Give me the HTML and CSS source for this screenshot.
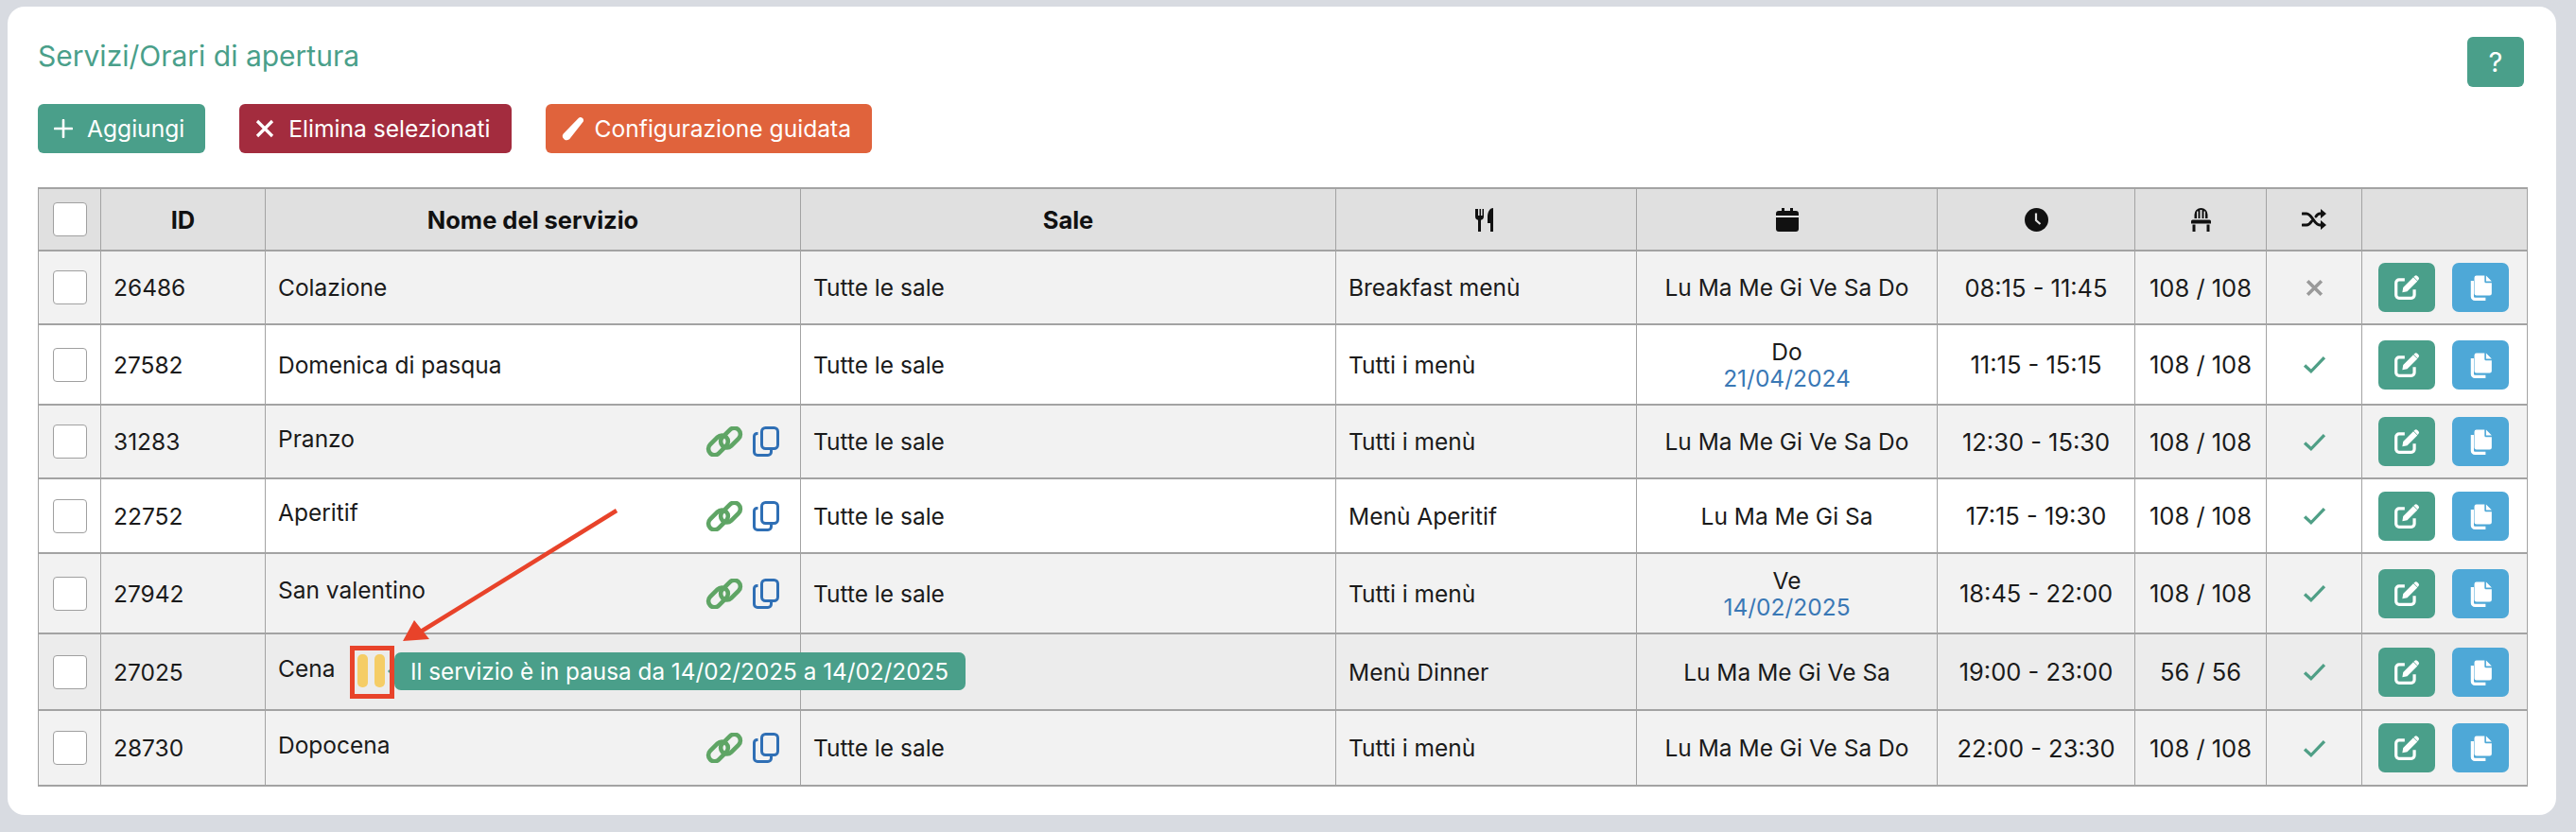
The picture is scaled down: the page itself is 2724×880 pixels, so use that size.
FILE: index.html
```html
<!DOCTYPE html>
<html lang="it">
<head>
<meta charset="utf-8">
<title>Servizi/Orari di apertura</title>
<link rel="stylesheet" href="styles.css">
</head>
<body>
<svg class="defs" width="0" height="0" aria-hidden="true">
  <defs>
    <symbol id="i-link" viewBox="0 0 40 32"><g fill="none" stroke="#5fa565" stroke-width="4.6"><rect x="-1" y="9.5" width="24" height="13" rx="6.5" transform="rotate(-45 11 16) translate(-1 4.5)"/><rect x="17" y="9.5" width="24" height="13" rx="6.5" transform="rotate(-45 29 16) translate(1 -4.5)"/></g></symbol>
    <symbol id="i-dup" viewBox="0 0 28 32"><g fill="none" stroke="#2f6fb5" stroke-width="3"><rect x="9.5" y="1.5" width="17" height="22" rx="4"/><path d="M5.500 7.500 H4.500 A3 3 0 0 0 1.500 10.500 V27 A3.500 3.500 0 0 0 5 30.500 H16 A3.500 3.500 0 0 0 19.500 27 V24"/></g></symbol>
    <symbol id="i-edit" viewBox="0 0 26 26"><path d="M11 5.500H5.500A3 3 0 0 0 2.500 8.500V20.500A3 3 0 0 0 5.500 23.500H17.500A3 3 0 0 0 20.500 20.500V15" fill="none" stroke="#fff" stroke-width="3"/><path d="M9.500 13 19.500 3l4 4-10 10-4.800.8zM20.700 1.800a2 2 0 0 1 2.800 0l1 1a2 2 0 0 1 0 2.800l-.8.800-3.800-3.800z" fill="#fff"/></symbol>
    <symbol id="i-copy" viewBox="0 0 24 26"><path d="M8 1.500h8v6a1 1 0 0 0 1 1h6V19a2 2 0 0 1-2 2H8a2 2 0 0 1-2-2V3.500a2 2 0 0 1 2-2zM17.500 1.500 23 7h-5.500z" fill="#fff"/><path d="M4 6.500V22a2.500 2.500 0 0 0 2.500 2.500H17" fill="none" stroke="#fff" stroke-width="3"/></symbol>
    <symbol id="i-check" viewBox="0 0 24 20"><path d="M2 11 8.500 17 22 3" fill="none" stroke="#4f9f86" stroke-width="3.200"/></symbol>
    <symbol id="i-x" viewBox="0 0 20 20"><path d="M3 3 17 17M17 3 3 17" fill="none" stroke="#9a9a9a" stroke-width="3.400"/></symbol>
  </defs>
</svg>
<main class="card">
  <header class="top">
    <h1 class="title">Servizi/Orari di apertura</h1>
    <button class="help" type="button">?</button>
  </header>
  <div class="toolbar">
    <button class="btn green" type="button"><svg class="bi" viewBox="0 0 20 20"><path d="M10 1V19M1 10H19" fill="none" stroke="#fff" stroke-width="2.600" stroke-linecap="round"/></svg>Aggiungi</button>
    <button class="btn red" type="button"><svg class="bi" viewBox="0 0 20 20"><path d="M2 2 18 18M18 2 2 18" fill="none" stroke="#fff" stroke-width="3.200"/></svg>Elimina selezionati</button>
    <button class="btn orange" type="button"><svg class="bi wide" viewBox="0 0 24 24"><path d="M17.500 1.500a3 3 0 0 1 4.500 3.500L9.500 21a4 4 0 0 1-6 1.500A4 4 0 0 1 2.500 17z" fill="#fff"/></svg>Configurazione guidata</button>
  </div>
  <table class="grid">
    <colgroup>
      <col class="c1"><col class="c2"><col class="c3"><col class="c3"><col class="c4"><col class="c4"><col class="c5"><col class="c6"><col class="c7"><col class="c8">
    </colgroup>
    <thead>
      <tr class="h66">
        <th><span class="box"></span></th>
        <th>ID</th>
        <th>Nome del servizio</th>
        <th>Sale</th>
        <th><svg class="hi w23" viewBox="0 0 23 25"><path d="M0 1v8a4 4 0 0 0 3 3.800V25h3V12.800A4 4 0 0 0 9 9V1H7.500v7H6V1H4.500v7H3V1.000H1.500V8H1.500V1zM16 25h3V0c-3 0-6 3-6 10v6h3z" fill="#111"/></svg></th>
        <th><svg class="hi w24" viewBox="0 0 24 25"><path d="M6 0h3v3h6V0h3v3h3a3 3 0 0 1 3 3v2H0V6a3 3 0 0 1 3-3h3zM0 10h24v12a3 3 0 0 1-3 3H3a3 3 0 0 1-3-3z" fill="#111"/></svg></th>
        <th><svg class="hi w25" viewBox="0 0 25 25"><circle cx="12.500" cy="12.500" r="12.500" fill="#111"/><path d="M12 5.500V13L16.500 17" fill="none" stroke="#e0e0e0" stroke-width="2.200"/></svg></th>
        <th><svg class="hi w21" viewBox="0 0 21 25"><path d="M3.500 11V7a7 7 0 0 1 14 0v4H15V3.500h-1.500V11h-2V2h-2v9h-2V3.500H6V11zM1.500 12.500h18A1.500 1.500 0 0 1 21 14v2.500H0V14a1.500 1.500 0 0 1 1.500-1.500zM1.500 17.500h3V25h-3zM16.500 17.500h3V25h-3z" fill="#111"/></svg></th>
        <th><svg class="hi w26" viewBox="0 0 26 22"><path d="M1 5h4c6 0 8 12 14 12h3M1 17h4c2.500 0 4.200-2 5.500-4M15 8c1-1.500 2.200-3 4-3h3" fill="none" stroke="#111" stroke-width="3" stroke-linecap="round"/><path d="M20 0 26 5l-6 5zM20 12l6 5-6 5z" fill="#111"/></svg></th>
        <th></th>
      </tr>
    </thead>
    <tbody>
      <tr class="row alt h78">
        <td><span class="box"></span></td><td>26486</td><td>Colazione</td><td>Tutte le sale</td><td>Breakfast menù</td>
        <td class="ctr">Lu Ma Me Gi Ve Sa Do</td><td class="ctr num">08:15 - 11:45</td><td class="ctr num">108 / 108</td>
        <td class="ctr"><svg class="st"><use href="#i-x"/></svg></td>
        <td class="acts"><span class="act green"><svg class="ai"><use href="#i-edit"/></svg></span><span class="act blue"><svg class="ai"><use href="#i-copy"/></svg></span></td>
      </tr>
      <tr class="row h85">
        <td><span class="box"></span></td><td>27582</td><td>Domenica di pasqua</td><td>Tutte le sale</td><td>Tutti i menù</td>
        <td class="ctr tight">Do<br><span class="date">21/04/2024</span></td><td class="ctr num">11:15 - 15:15</td><td class="ctr num">108 / 108</td>
        <td class="ctr"><svg class="st"><use href="#i-check"/></svg></td>
        <td class="acts"><span class="act green"><svg class="ai"><use href="#i-edit"/></svg></span><span class="act blue"><svg class="ai"><use href="#i-copy"/></svg></span></td>
      </tr>
      <tr class="row alt h78">
        <td><span class="box"></span></td><td>31283</td>
        <td><div class="name"><span class="nm">Pranzo</span><span class="tools"><svg class="tl"><use href="#i-link"/></svg><svg class="td"><use href="#i-dup"/></svg></span></div></td>
        <td>Tutte le sale</td><td>Tutti i menù</td>
        <td class="ctr">Lu Ma Me Gi Ve Sa Do</td><td class="ctr num">12:30 - 15:30</td><td class="ctr num">108 / 108</td>
        <td class="ctr"><svg class="st"><use href="#i-check"/></svg></td>
        <td class="acts"><span class="act green"><svg class="ai"><use href="#i-edit"/></svg></span><span class="act blue"><svg class="ai"><use href="#i-copy"/></svg></span></td>
      </tr>
      <tr class="row h79">
        <td><span class="box"></span></td><td>22752</td>
        <td><div class="name"><span class="nm">Aperitif</span><span class="tools"><svg class="tl"><use href="#i-link"/></svg><svg class="td"><use href="#i-dup"/></svg></span></div></td>
        <td>Tutte le sale</td><td>Menù Aperitif</td>
        <td class="ctr">Lu Ma Me Gi Sa</td><td class="ctr num">17:15 - 19:30</td><td class="ctr num">108 / 108</td>
        <td class="ctr"><svg class="st"><use href="#i-check"/></svg></td>
        <td class="acts"><span class="act green"><svg class="ai"><use href="#i-edit"/></svg></span><span class="act blue"><svg class="ai"><use href="#i-copy"/></svg></span></td>
      </tr>
      <tr class="row alt h85">
        <td><span class="box"></span></td><td>27942</td>
        <td><div class="name"><span class="nm">San valentino</span><span class="tools"><svg class="tl"><use href="#i-link"/></svg><svg class="td"><use href="#i-dup"/></svg></span></div></td>
        <td>Tutte le sale</td><td>Tutti i menù</td>
        <td class="ctr tight">Ve<br><span class="date">14/02/2025</span></td><td class="ctr num">18:45 - 22:00</td><td class="ctr num">108 / 108</td>
        <td class="ctr"><svg class="st"><use href="#i-check"/></svg></td>
        <td class="acts"><span class="act green"><svg class="ai"><use href="#i-edit"/></svg></span><span class="act blue"><svg class="ai"><use href="#i-copy"/></svg></span></td>
      </tr>
      <tr class="row hover h81">
        <td><span class="box"></span></td><td>27025</td>
        <td><div class="name"><span class="nm">Cena</span><span class="tools"><svg class="tl"><use href="#i-link"/></svg><svg class="td"><use href="#i-dup"/></svg></span></div></td>
        <td></td><td>Menù Dinner</td>
        <td class="ctr">Lu Ma Me Gi Ve Sa</td><td class="ctr num">19:00 - 23:00</td><td class="ctr num">56 / 56</td>
        <td class="ctr"><svg class="st"><use href="#i-check"/></svg></td>
        <td class="acts"><span class="act green"><svg class="ai"><use href="#i-edit"/></svg></span><span class="act blue"><svg class="ai"><use href="#i-copy"/></svg></span></td>
      </tr>
      <tr class="row alt h80">
        <td><span class="box"></span></td><td>28730</td>
        <td><div class="name"><span class="nm">Dopocena</span><span class="tools"><svg class="tl"><use href="#i-link"/></svg><svg class="td"><use href="#i-dup"/></svg></span></div></td>
        <td>Tutte le sale</td><td>Tutti i menù</td>
        <td class="ctr">Lu Ma Me Gi Ve Sa Do</td><td class="ctr num">22:00 - 23:30</td><td class="ctr num">108 / 108</td>
        <td class="ctr"><svg class="st"><use href="#i-check"/></svg></td>
        <td class="acts"><span class="act green"><svg class="ai"><use href="#i-edit"/></svg></span><span class="act blue"><svg class="ai"><use href="#i-copy"/></svg></span></td>
      </tr>
    </tbody>
  </table>
</main>
<div class="pause"><i></i><i></i></div>
<div class="tip">Il servizio è in pausa da 14/02/2025 a 14/02/2025</div>
<div class="mark"></div>
<svg class="arrow" viewBox="0 0 240 150"><path d="M227 5 20 133" fill="none" stroke="#e8432a" stroke-width="4.500"/><path d="M1 143 13 121 29 141z" fill="#e8432a"/></svg>
</body>
</html>
```
FILE: styles.css
```css
* { box-sizing: border-box; }
html, body { margin: 0; height: 880px; }
body {
  background: #d8dbe1;
  font-family: Inter, "Liberation Sans", sans-serif;
  font-size: 24.5px;
  color: #1a1a1a;
  overflow: hidden;
  position: relative;
}
.defs { position: absolute; }
.card {
  margin: 7px 21px 0 8px;
  height: 855px;
  background: #fff;
  border-radius: 18px;
  padding: 32px 31px 0 32px;
}
.top { display: flex; justify-content: space-between; align-items: flex-start; height: 53px; padding-right: 3px; }
.title { margin: 0; font-size: 30px; font-weight: 400; color: #4a9f8a; line-height: 40px; }
.help {
  width: 60px; height: 53px; border: 0; border-radius: 6px;
  background: #4a9f8a; color: #fff; font: 400 29px Inter, sans-serif; padding: 0;
}
.toolbar { display: flex; gap: 36px; margin-top: 18px; margin-bottom: 36px; }
.btn {
  height: 52px; border: 0; border-radius: 6px; padding: 0 22px 0 17px;
  display: flex; align-items: center; gap: 15px; color: #fff;
  font: 400 24.6px Inter, sans-serif; white-space: nowrap;
}
.bi { width: 20px; height: 20px; flex: none; }
.bi.wide { width: 26px; height: 26px; margin-left: -1px; margin-right: -5px; }
.green { background: #4a9f8a; }
.red { background: #a32c3e; }
.orange { background: #e0633c; }
.blue { background: #4ea8d7; }
.grid { width: 2632px; table-layout: fixed; border-collapse: collapse; }
.c1 { width: 66px; } .c2 { width: 174px; } .c3 { width: 566px; } .c4 { width: 318px; }
.c5 { width: 209px; } .c6 { width: 139px; } .c7 { width: 101px; } .c8 { width: 175px; }
.grid th, .grid td { border: 1px solid #a3a3a3; padding: 0 13px; vertical-align: middle; }
.grid tr { border-top: 2px solid #a3a3a3; border-bottom: 2px solid #a3a3a3; }
.grid th { background: #e0e0e0; font-size: 25.500px; font-weight: 700; text-align: center; color: #111; }
.grid th:first-child, .grid td:first-child { padding: 0; text-align: center; }
.h66 { height: 66px; } .h78 { height: 78px; } .h79 { height: 79px; } .h80 { height: 80px; } .h81 { height: 81px; } .h85 { height: 85px; }
.row { background: #fff; }
.alt { background: #f2f2f2; }
.hover { background: #ececec; }
.box { display: inline-block; width: 36px; height: 36px; background: #fff; border: 1px solid #a0a0a0; border-radius: 4px; vertical-align: middle; }
.ctr { text-align: center; }
.grid td.num { font-size: 25.500px; padding: 0; }
.tight { line-height: 28px; }
.date { color: #3a78b5; }
.name { display: flex; justify-content: space-between; align-items: center; padding-right: 9px; }
.nm { margin-bottom: 7px; }
.tools { display: flex; align-items: center; gap: 10px; }
.tl { width: 40px; height: 32px; }
.td { width: 28px; height: 32px; }
.st { width: 25px; height: 21px; display: block; margin: 0 auto; }
.hi { display: block; margin: 0 auto; height: 25px; }
.w21 { width: 21px; } .w23 { width: 23px; } .w24 { width: 24px; } .w25 { width: 25px; }
.w26 { width: 26px; height: 22px; }
.grid td.acts { padding: 0 0 0 17px; }
.acts { white-space: nowrap; }
.act { display: inline-flex; width: 60px; height: 52px; border-radius: 7px; align-items: center; justify-content: center; vertical-align: middle; }
.act + .act { margin-left: 18px; }
.ai { width: 28px; height: 28px; }
.pause { position: absolute; left: 378px; top: 692px; display: flex; gap: 7px; }
.pause i { display: block; width: 11px; height: 35px; border-radius: 5px; background: #f5cd66; }
.mark { position: absolute; left: 370px; top: 683px; width: 47px; height: 56px; border: 5px solid #e8432a; }
.tip {
  position: absolute; left: 417px; top: 690px; width: 604px; height: 40px;
  background: #4a9f8a; color: #fff; border-radius: 7px; font-size: 24.300px; line-height: 40px; padding-left: 17px; white-space: nowrap;
}
.tip::before {
  content: ""; position: absolute; left: -7px; top: 13px;
  border-style: solid; border-width: 7px 7px 7px 0; border-color: transparent #4a9f8a transparent transparent;
}
.arrow { position: absolute; left: 425px; top: 535px; width: 240px; height: 150px; }
```
